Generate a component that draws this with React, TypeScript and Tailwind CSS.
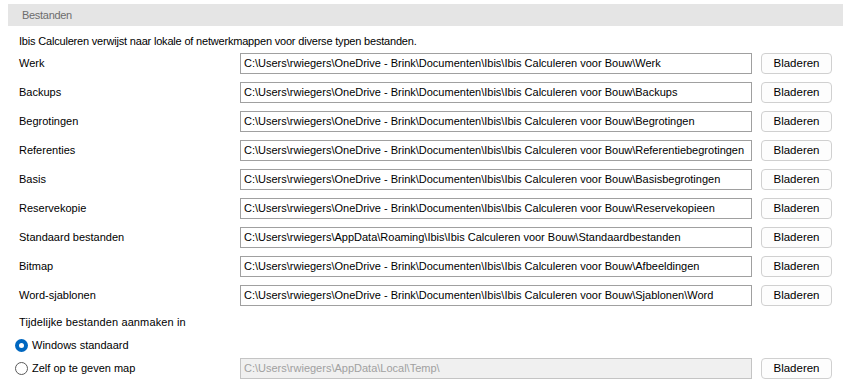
const rows = [
  { label: "Werk", path: "C:\\Users\\rwiegers\\OneDrive - Brink\\Documenten\\Ibis\\Ibis Calculeren voor Bouw\\Werk" },
  { label: "Backups", path: "C:\\Users\\rwiegers\\OneDrive - Brink\\Documenten\\Ibis\\Ibis Calculeren voor Bouw\\Backups" },
  { label: "Begrotingen", path: "C:\\Users\\rwiegers\\OneDrive - Brink\\Documenten\\Ibis\\Ibis Calculeren voor Bouw\\Begrotingen" },
  { label: "Referenties", path: "C:\\Users\\rwiegers\\OneDrive - Brink\\Documenten\\Ibis\\Ibis Calculeren voor Bouw\\Referentiebegrotingen" },
  { label: "Basis", path: "C:\\Users\\rwiegers\\OneDrive - Brink\\Documenten\\Ibis\\Ibis Calculeren voor Bouw\\Basisbegrotingen" },
  { label: "Reservekopie", path: "C:\\Users\\rwiegers\\OneDrive - Brink\\Documenten\\Ibis\\Ibis Calculeren voor Bouw\\Reservekopieen" },
  { label: "Standaard bestanden", path: "C:\\Users\\rwiegers\\AppData\\Roaming\\Ibis\\Ibis Calculeren voor Bouw\\Standaardbestanden" },
  { label: "Bitmap", path: "C:\\Users\\rwiegers\\OneDrive - Brink\\Documenten\\Ibis\\Ibis Calculeren voor Bouw\\Afbeeldingen" },
  { label: "Word-sjablonen", path: "C:\\Users\\rwiegers\\OneDrive - Brink\\Documenten\\Ibis\\Ibis Calculeren voor Bouw\\Sjablonen\\Word" },
];

function BrowseButton() {
  return (
    <button className="ml-[9px] w-[71px] h-[21px] rounded-[4px] border border-[#d0d0d0] bg-[#fdfdfd] text-black text-[11.5px] leading-none flex items-center justify-center">
      Bladeren
    </button>
  );
}

function Radio({ checked, label }: { checked: boolean; label: string }) {
  return (
    <div className="flex items-center h-[16px] pl-[15px]">
      {checked ? (
        <span className="w-[13px] h-[13px] rounded-full bg-[#0067c0] flex items-center justify-center">
          <span className="w-[5px] h-[5px] rounded-full bg-white" />
        </span>
      ) : (
        <span className="w-[13px] h-[13px] rounded-full border border-[#5a5a5a] bg-white" />
      )}
      <span className="ml-[4px]">{label}</span>
    </div>
  );
}

export default function App() {
  return (
    <div
      className="w-[852px] h-[384px] bg-white text-black text-[11px] overflow-hidden"
      style={{ fontFamily: '"Liberation Sans", Arial, sans-serif' }}
    >
      {/* section header */}
      <div className="ml-[8px] mr-[9px] mt-[4px] h-[22px] bg-[#e5e5e5] flex items-center pl-[14px] text-[#6d6d6d] tracking-[-0.3px]">
        Bestanden
      </div>

      <div className="ml-[19px] mt-[7px] h-[16px] leading-[16px] tracking-[-0.19px]">
        Ibis Calculeren verwijst naar lokale of netwerkmappen voor diverse typen bestanden.
      </div>

      <div className="mt-[4px] flex flex-col gap-[8px]">
        {rows.map((r) => (
          <div key={r.label} className="flex items-center h-[21px] pl-[19px]">
            <span className="w-[221px]">{r.label}</span>
            <div className="w-[512px] h-[21px] border border-[#a0a0a0] bg-white flex items-center pl-[3px] whitespace-nowrap overflow-hidden">
              {r.path}
            </div>
            <BrowseButton />
          </div>
        ))}
      </div>

      <div className="ml-[19px] mt-[8px] h-[16px] leading-[16px] tracking-[0.12px]">Tijdelijke bestanden aanmaken in</div>

      <div className="mt-[7px]">
        <Radio checked label="Windows standaard" />
      </div>

      <div className="mt-[5px] flex items-center h-[21px]">
        <div className="w-[240px]">
          <Radio checked={false} label="Zelf op te geven map" />
        </div>
        <div className="w-[512px] h-[21px] border border-[#c4c4c4] bg-[#f0f0f0] text-[#a0a0a0] flex items-center pl-[3px] whitespace-nowrap overflow-hidden">
          C:\Users\rwiegers\AppData\Local\Temp\
        </div>
        <BrowseButton />
      </div>
    </div>
  );
}
